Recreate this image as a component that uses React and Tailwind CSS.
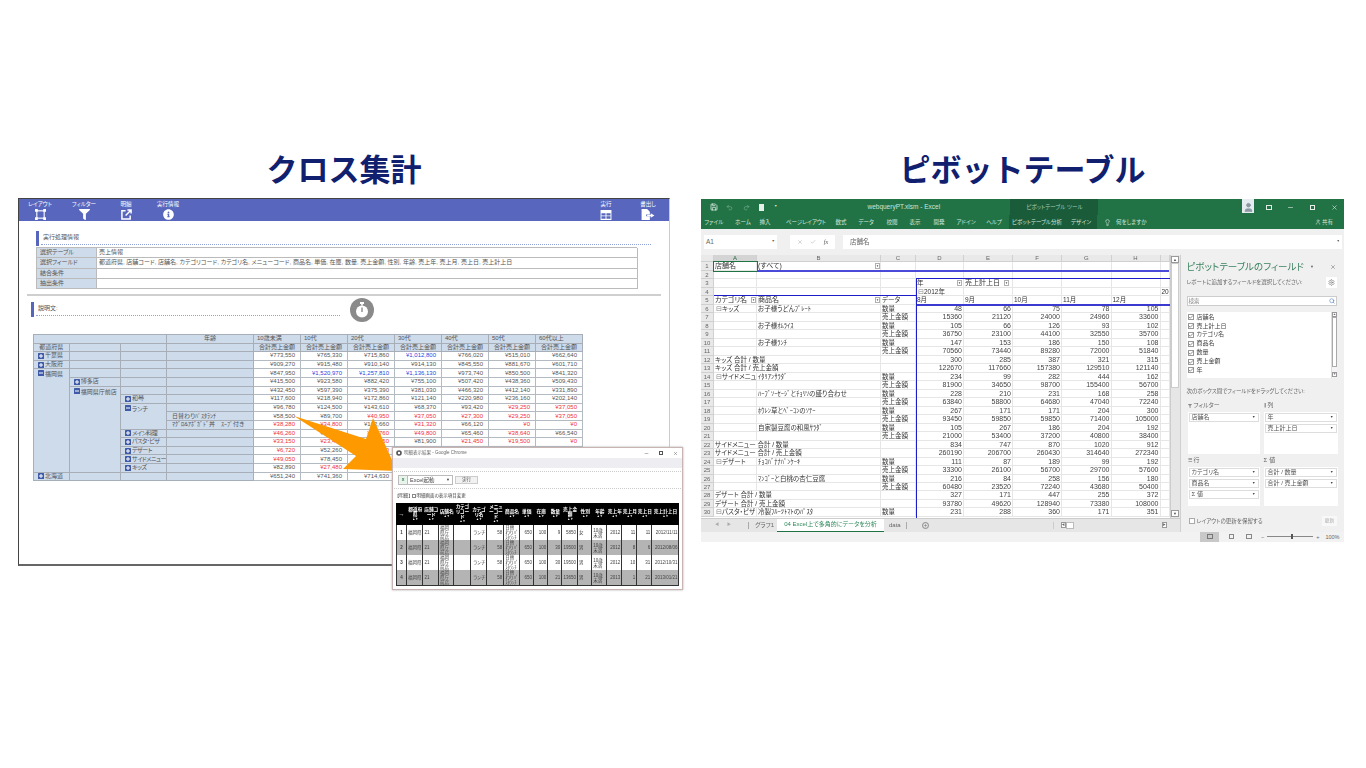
import React from "react";
import { FaFilter, FaInfoCircle } from "react-icons/fa";
import { Save, Undo2, Redo2, Lightbulb, Search, Settings, X, Minus, Check, User, Plus } from "lucide-react";

const jp = "[font-family:'Liberation_Sans','Noto_Sans_CJK_JP',sans-serif]";

function Toggle({ minus }) {
  return (
    <svg width="6" height="6" viewBox="0 0 6 6" className="shrink-0 mr-[1px]">
      <rect width="6" height="6" rx="0.6" fill="#3f5aa6" />
      <rect x="1" y="2.5" width="4" height="1" fill="#fff" />
      {!minus && <rect x="2.5" y="1" width="1" height="4" fill="#fff" />}
    </svg>
  );
}

function ToolItem({ label, icon, cls }) {
  return (
    <div className={"w-[42px] flex flex-col items-center pt-[1px] " + (cls || "")}>
      <div className="text-[5.5px] leading-[8px] h-[9px] text-white whitespace-nowrap">{label}</div>
      <div className="h-[11px] flex items-center justify-center text-white">{icon}</div>
    </div>
  );
}

function SectionHead({ title, cls, lineCls }) {
  return (
    <div className={"flex h-[15px] " + cls}>
      <div className="w-[3px] bg-[#5666bd]" />
      <div className={"ml-[2px] h-[14px] border-b border-dotted border-[#8fa3d8] pl-[2px] text-[6px] leading-[12px] text-[#555] " + lineCls}>{title}</div>
    </div>
  );
}

const fields = "都道府県, 店舗コード, 店舗名, カテゴリコード, カテゴリ名, メニューコード, 商品名, 単価, 在庫, 数量, 売上金額, 性別, 年齢, 売上年, 売上月, 売上日, 売上計上日";

const ageHeads = ["10歳未満", "10代", "20代", "30代", "40代", "50代", "60代以上"];

const B = "#2f3fe0";
const R = "#f03040";
const nums = [
  [["¥773,550"], ["¥765,330"], ["¥715,860"], ["¥1,012,800", B], ["¥766,020"], ["¥515,010"], ["¥662,640"]],
  [["¥909,270"], ["¥915,480"], ["¥910,140"], ["¥914,130"], ["¥845,550"], ["¥881,670"], ["¥601,710"]],
  [["¥847,950"], ["¥1,520,970", B], ["¥1,257,810", B], ["¥1,136,130", B], ["¥973,740"], ["¥850,500"], ["¥841,320"]],
  [["¥415,500"], ["¥923,580"], ["¥882,420"], ["¥755,100"], ["¥507,420"], ["¥438,360"], ["¥509,430"]],
  [["¥432,450"], ["¥597,390"], ["¥375,390"], ["¥381,030"], ["¥466,320"], ["¥412,140"], ["¥331,890"]],
  [["¥117,600"], ["¥218,940"], ["¥172,860"], ["¥121,140"], ["¥220,980"], ["¥236,160"], ["¥202,140"]],
  [["¥96,780"], ["¥124,500"], ["¥143,610"], ["¥68,370"], ["¥93,420"], ["¥29,250", R], ["¥37,050", R]],
  [["¥58,500"], ["¥89,700"], ["¥40,950", R], ["¥37,050", R], ["¥27,300", R], ["¥29,250", R], ["¥37,050", R]],
  [["¥38,280", R], ["¥34,800", R], ["¥102,660"], ["¥31,320", R], ["¥66,120"], ["¥0", R], ["¥0", R]],
  [["¥46,260", R], ["¥60,720"], ["¥38,760", R], ["¥49,800", R], ["¥65,460"], ["¥38,640", R], ["¥66,540"]],
  [["¥33,150", R], ["¥23,400", R], ["¥26,250", R], ["¥81,900"], ["¥21,450", R], ["¥19,500", R], ["¥0", R]],
  [["¥6,720", R], ["¥52,260"], ["¥23,520", R], ["¥51,240"], ["¥30,240", R], ["¥21,840", R], ["¥0", R]],
  [["¥49,050", R], ["¥78,450"], ["¥36,000", R], ["¥44,700", R], ["¥31,950", R], ["¥20,700", R], ["¥0", R]],
  [["¥82,890"], ["¥27,480", R], ["¥0", R], ["¥0", R], ["¥0", R], ["¥0", R], ["¥0", R]],
  [["¥651,240"], ["¥741,360"], ["¥714,630"], ["¥826,110"], ["¥702,330"], ["¥594,120"], ["¥618,450"]],
];

const hc = "border-r border-b border-[#a7aeb8] bg-[#cddbeb] flex items-center text-[6px] text-[#555] whitespace-nowrap overflow-hidden";

function NumCells({ row }) {
  return row.map((c, i) => (
    <div key={i} style={c[1] ? { color: c[1] } : undefined} className="border-r border-b border-[#b4bac2] bg-white flex items-center justify-end pr-[5px] text-[6px] text-[#555]">
      {c[0]}
    </div>
  ));
}

function LeftPivot() {
  return (
    <div className="ml-[14px] mt-[12px] w-[550px] grid grid-cols-[35.7px_51.3px_46px_87px_repeat(7,47px)] auto-rows-[8.6px] border-l border-t border-[#a7aeb8]">
      <div className={hc + " col-span-3"} />
      <div className={hc + " justify-center"}>年齢</div>
      {ageHeads.map((a) => <div key={a} className={hc + " pl-[3px]"}>{a}</div>)}
      <div className={hc + " justify-center"}>都道府県</div>
      <div className={hc} /><div className={hc} /><div className={hc} />
      {ageHeads.map((a) => <div key={a} className={hc + " justify-center"}>合計売上金額</div>)}

      <div className={hc + " pl-[4px]"}><Toggle />千葉県</div>
      <div className={hc} /><div className={hc} /><div className={hc} />
      <NumCells row={nums[0]} />

      <div className={hc + " pl-[4px]"}><Toggle />大阪府</div>
      <div className={hc} /><div className={hc} /><div className={hc} />
      <NumCells row={nums[1]} />

      <div className={hc + " pl-[4px] row-span-12 items-start pt-[1px]"}><Toggle minus />福岡県</div>
      <div className={hc} /><div className={hc} /><div className={hc} />
      <NumCells row={nums[2]} />

      <div className={hc + " pl-[4px]"}><Toggle />博多店</div>
      <div className={hc} /><div className={hc} />
      <NumCells row={nums[3]} />

      <div className={hc + " pl-[4px] row-span-10 items-start pt-[1px]"}><Toggle minus />福岡県庁前店</div>
      <div className={hc} /><div className={hc} />
      <NumCells row={nums[4]} />

      <div className={hc + " pl-[4px]"}><Toggle />和琴</div>
      <div className={hc} />
      <NumCells row={nums[5]} />

      <div className={hc + " pl-[4px] row-span-3 items-start pt-[1px]"}><Toggle minus />ランチ</div>
      <div className={hc} />
      <NumCells row={nums[6]} />

      <div className={hc + " pl-[5px]"}>日替わりﾊﾟｽﾀﾗﾝﾁ</div>
      <NumCells row={nums[7]} />

      <div className={hc + " pl-[5px]"}>ﾏｸﾞﾛ&ｱﾎﾞｶﾞﾄﾞ丼　ｽｰﾌﾟ付き</div>
      <NumCells row={nums[8]} />

      {["メイン料理", "パスタ･ピザ", "デザート", "サイドメニュー", "キッズ"].map((l, i) => (
        <React.Fragment key={l}>
          <div className={hc + " pl-[4px] text-[5.300px] tracking-[-0.5px]"}><Toggle />{l}</div>
          <div className={hc} />
          <NumCells row={nums[9 + i]} />
        </React.Fragment>
      ))}

      <div className={hc + " pl-[4px]"}><Toggle />北海道</div>
      <div className={hc} /><div className={hc} /><div className={hc} />
      <NumCells row={nums[14]} />
    </div>
  );
}

const popCols = "grid-cols-[11px_16.4px_15.6px_15.4px_16.3px_16.7px_17px_15.3px_14.3px_14.4px_14px_15.6px_14.4px_15px_15px_15px_15px_26.3px]";
const popHead = ["都道府県", "店舗コード", "店舗名", "カテゴリコード", "カテゴリ名", "メニューコード", "商品名", "単価", "在庫", "数量", "売上金額", "性別", "年齢", "売上年", "売上月", "売上日", "売上計上日"];
const popRows = [
  ["1", "9", "5850", "女", "2012", "11", "11", "2012/11/11"],
  ["2", "30", "19500", "男", "2012", "8", "6", "2012/08/06"],
  ["3", "30", "19500", "男", "2012", "10", "31", "2012/10/31"],
  ["4", "21", "13650", "男", "2013", "1", "21", "2013/01/21"],
];

function Popup() {
  const cell = "border-r border-[#333] flex items-center text-[4.500px] leading-[5px] text-[#444] overflow-hidden";
  return (
    <div className="absolute left-[373px] top-[248px] w-[291px] h-[143px] bg-white border border-[#c9b4b4] shadow-[0_0_2px_#aaa] z-20">
      <div className="h-[10px] flex items-center pl-[3px] text-[4.500px] text-[#666]">
        <svg width="6" height="6" viewBox="0 0 6 6" className="mr-[2px]"><circle cx="3" cy="3" r="2.8" fill="#555" /><circle cx="3" cy="3" r="1.2" fill="#fff" /></svg>
        明細表示結果 - Google Chrome
        <div className="ml-auto flex items-center gap-[10px] pr-[4px] text-[#555]">
          <Minus size={5} /><div className="w-[4px] h-[4px] border border-[#555]" /><X size={5} />
        </div>
      </div>
      <div className="h-[10px] bg-[#eeeef2]" />
      <div className="mx-[1px] mt-[3px] border-t border-dotted border-[#ccc]" />
      <div className="mt-[3px] flex items-start pl-[5px]">
        <div className="w-[55px] h-[10px] border border-[#bbb] bg-white flex items-center text-[5.500px] text-[#444]">
          <div className="w-[9px] h-full border-r border-[#bbb] bg-[#eaf3ec] flex items-center justify-center text-[4px] text-[#1d7a45] font-bold">X</div>
          <span className="pl-[2px]">Excel起動</span>
          <span className="ml-auto pr-[2px] text-[4px]">▼</span>
        </div>
        <div className="ml-[2px] w-[23px] h-[8px] mt-[1px] border border-[#ccc] bg-[#f2f2f2] flex items-center justify-center text-[4.500px] text-[#444]">実行</div>
      </div>
      <div className="mx-[1px] mt-[3px] border-t border-dotted border-[#ccc]" />
      <div className="mt-[3px] pl-[4px] h-[8px] flex items-center text-[4.500px] text-[#444]">
        【明細】<div className="w-[4px] h-[4px] border border-[#888] mx-[1px]" />明細画面の表示項目変更
      </div>
      <div className={"ml-[3px] mt-[3px] w-[283px] grid " + popCols + " grid-rows-[22px_15px_15px_15px_15px] border-b border-[#333]"}>
        <div className="bg-black flex items-center justify-center text-[6px] text-white font-bold">→</div>
        {popHead.map((h) => (
          <div key={h} className="bg-black flex flex-col items-center justify-center text-white font-bold text-[4.700px] leading-[5px] text-center [font-family:'Liberation_Serif','Noto_Sans_CJK_JP',serif]">
            <span>{h}</span>
            <span className="text-[3px] leading-[5px]">▲▼</span>
          </div>
        ))}
        {popRows.map((r, i) => {
          const bg = i % 2 ? " bg-[#b4b4b4]" : " bg-white";
          return (
            <React.Fragment key={r[0]}>
              <div className={cell + bg + " border-l justify-center font-bold"}>{r[0]}</div>
              <div className={cell + bg + " pl-[1px]"}>福岡県</div>
              <div className={cell + bg + " pl-[1px]"}>21</div>
              <div className={cell + bg + " pl-[1px]"}>福岡県庁前店</div>
              <div className={cell + bg} />
              <div className={cell + bg + " justify-end pr-[1px]"}>ランチ</div>
              <div className={cell + bg + " justify-end pr-[1px]"}>58</div>
              <div className={cell + bg + " pl-[1px]"}>日替わりﾊﾟｽﾀﾗﾝﾁ</div>
              <div className={cell + bg + " justify-end pr-[1px]"}>650</div>
              <div className={cell + bg + " justify-end pr-[1px]"}>100</div>
              <div className={cell + bg + " justify-end pr-[1px]"}>{r[1]}</div>
              <div className={cell + bg + " justify-end pr-[1px]"}>{r[2]}</div>
              <div className={cell + bg + " pl-[1px]"}>{r[3]}</div>
              <div className={cell + bg + " pl-[1px]"}>10歳未満</div>
              <div className={cell + bg + " justify-end pr-[1px]"}>{r[4]}</div>
              <div className={cell + bg + " justify-end pr-[1px]"}>{r[5]}</div>
              <div className={cell + bg + " justify-end pr-[1px]"}>{r[6]}</div>
              <div className={cell + bg + " justify-end"}>{r[7]}</div>
            </React.Fragment>
          );
        })}
      </div>
    </div>
  );
}

function LeftPanel() {
  const a = "border-r border-b border-[#bbb] flex items-center text-[6px] text-[#555] whitespace-nowrap";
  return (
    <div className={"relative w-[652px] h-[368px] bg-white border-l border-t border-b-2 border-r border-l-[#444] border-t-[#444] border-b-[#666] border-r-[#ccc] [font-feature-settings:'palt'] " + jp}>
      <div className="h-[22px] bg-[#5867bd] flex">
        <ToolItem label="レイアウト" icon={
          <svg width="11" height="11" viewBox="0 0 12 12" fill="#fff"><rect x="2" y="2" width="8" height="8" fill="none" stroke="#fff" strokeWidth="1.200" /><rect x="0" y="0" width="3" height="3" /><rect x="9" y="0" width="3" height="3" /><rect x="0" y="9" width="3" height="3" /><rect x="9" y="9" width="3" height="3" /></svg>
        } />
        <ToolItem cls="ml-[2px]" label="フィルター" icon={<FaFilter size={11} />} />
        <ToolItem label="明細" icon={
          <svg width="11" height="11" viewBox="0 0 12 12" fill="none" stroke="#fff" strokeWidth="1.600"><path d="M5 2H1v9h9V7" /><path d="M5 7l6-6M7 1h4v4" /></svg>
        } />
        <ToolItem label="実行情報" icon={<FaInfoCircle size={11} />} />
        <div className="flex-1" />
        <ToolItem label="実行" icon={
          <svg width="12" height="10" viewBox="0 0 12 11" fill="#fff"><path d="M0 0h12v11H0z" /><path d="M1 3.500h4.500v2.500H1zM6.500 3.500H11v2.500H6.500zM1 7h4.500v2.500H1zM6.500 7H11v2.500H6.500z" fill="#5867bd" /></svg>
        } />
        <ToolItem label="書出し" icon={
          <svg width="14" height="11" viewBox="0 0 14 12" fill="#fff"><path d="M0 0h6l3 3v3H5v2h4v4H0z" /><path d="M6 6.200h4V4.500L14 7l-4 2.500V7.800H6z" /></svg>
        } />
      </div>

      <SectionHead title="実行処理情報" cls="ml-[17px] mt-[10px]" lineCls="w-[610px]" />

      <div className="ml-[17px] mt-[1px] w-[601px] grid grid-cols-[60px_541px] auto-rows-[10.25px] border-l border-t border-[#bbb]">
        <div className={a + " bg-[#cddbeb] pl-[3px]"}>選択テーブル</div><div className={a + " pl-[2px]"}>売上情報</div>
        <div className={a + " bg-[#cddbeb] pl-[3px]"}>選択フィールド</div><div className={a + " pl-[2px] text-[5.700px]"}>{fields}</div>
        <div className={a + " bg-[#cddbeb] pl-[3px]"}>結合条件</div><div className={a} />
        <div className={a + " bg-[#cddbeb] pl-[3px]"}>抽出条件</div><div className={a} />
      </div>

      <div className="ml-[8px] mt-[5px] w-[634px] h-[2px] bg-[#cfcfcf]" />

      <div className="ml-[12px] mt-[2px] h-[24px] flex">
        <div className="mt-[4px] flex">
          <SectionHead title="説明文:" cls="" lineCls="w-[304px]" />
        </div>
        <div className="ml-[10px] w-[24px] h-[24px] rounded-full bg-[#8a8a8a] flex items-center justify-center">
          <svg width="14" height="16" viewBox="0 0 14 16" fill="#fff"><rect x="5" y="0" width="4" height="2" /><rect x="6.200" y="1.500" width="1.600" height="2" /><circle cx="7" cy="9.500" r="6" /><rect x="6.300" y="5.500" width="1.400" height="4.500" fill="#8a8a8a" /></svg>
        </div>
      </div>

      <LeftPivot />

      <svg className="absolute left-[270px] top-[212px] z-10" width="110" height="60" viewBox="0 0 110 60">
        <polygon points="5,5 77,28 84,7 108,60 54,58 67,45" fill="#ff9900" />
      </svg>

      <Popup />
    </div>
  );
}

/* ---------- Excel ---------- */
const sheet = [
  [6, "⊟キッズ", "お子様うどんﾌﾟﾚｰﾄ", "数量", [48, 66, 75, 78, 105]],
  [7, "", "", "売上金額", [15360, 21120, 24000, 24960, 33600]],
  [8, "", "お子様ｵﾑﾗｲｽ", "数量", [105, 66, 126, 93, 102]],
  [9, "", "", "売上金額", [36750, 23100, 44100, 32550, 35700]],
  [10, "", "お子様ﾗﾝﾁ", "数量", [147, 153, 186, 150, 108]],
  [11, "", "", "売上金額", [70560, 73440, 89280, 72000, 51840]],
  [12, "キッズ 合計 / 数量", "", "", [300, 285, 387, 321, 315]],
  [13, "キッズ 合計 / 売上金額", "", "", [122670, 117660, 157380, 129510, 121140]],
  [14, "⊟サイドメニュー", "ｲﾀﾘｱﾝｻﾗﾀﾞ", "数量", [234, 99, 282, 444, 162]],
  [15, "", "", "売上金額", [81900, 34650, 98700, 155400, 56700]],
  [16, "", "ﾊｰﾌﾞｿｰｾｰｼﾞとﾁｮﾘｿの盛り合わせ", "数量", [228, 210, 231, 168, 258]],
  [17, "", "", "売上金額", [63840, 58800, 64680, 47040, 72240]],
  [18, "", "ﾎｳﾚﾝ草とﾍﾞｰｺﾝのｿﾃｰ", "数量", [267, 171, 171, 204, 300]],
  [19, "", "", "売上金額", [93450, 59850, 59850, 71400, 105000]],
  [20, "", "自家製豆腐の和風ｻﾗﾀﾞ", "数量", [105, 267, 186, 204, 192]],
  [21, "", "", "売上金額", [21000, 53400, 37200, 40800, 38400]],
  [22, "サイドメニュー 合計 / 数量", "", "", [834, 747, 870, 1020, 912]],
  [23, "サイドメニュー 合計 / 売上金額", "", "", [260190, 206700, 260430, 314640, 272340]],
  [24, "⊟デザート", "ﾁｮｺﾊﾞﾅﾅﾊﾟﾝｹｰｷ", "数量", [111, 87, 189, 99, 192]],
  [25, "", "", "売上金額", [33300, 26100, 56700, 29700, 57600]],
  [26, "", "ﾏﾝｺﾞｰと白桃の杏仁豆腐", "数量", [216, 84, 258, 156, 180]],
  [27, "", "", "売上金額", [60480, 23520, 72240, 43680, 50400]],
  [28, "デザート 合計 / 数量", "", "", [327, 171, 447, 255, 372]],
  [29, "デザート 合計 / 売上金額", "", "", [93780, 49620, 128940, 73380, 108000]],
  [30, "⊟パスタ・ピザ", "冷製ﾌﾙｰﾂﾄﾏﾄのﾊﾟｽﾀ", "数量", [231, 288, 360, 171, 351]],
];

const sc = "border-r border-b border-[#e4e7e4] text-[6.500px] leading-[8px] text-[#333] whitespace-nowrap pl-[1px] relative";
const rh = "bg-[#e9e9e9] border-r border-b border-[#d0d0d0] text-[6px] leading-[8px] text-[#666] text-center [font-family:'Liberation_Sans',sans-serif]";
const nc = "border-r border-b border-[#e4e7e4] text-[7px] leading-[8px] text-[#444] text-right pr-[1px] [font-family:'Liberation_Sans',sans-serif]";

function Drop({ cls }) {
  return <span className={"absolute top-[1px] w-[5px] h-[5.500px] bg-white border border-[#b0b0b0] flex items-center justify-center text-[3px] text-[#555] leading-none " + cls}>▼</span>;
}

function Empty({ n }) {
  return Array.from({ length: n }).map((_, i) => <div key={i} className={sc} />);
}

function Sheet() {
  return (
    <div className="relative w-[468.500px] h-[263px] overflow-hidden bg-white">
      <div className="grid grid-cols-[13px_43px_124px_35px_48px_49px_49px_49.500px_49px_9px] grid-rows-[7.400px] auto-rows-[8.490px]">
        <div className={rh} />
        {["A", "B", "C", "D", "E", "F", "G", "H", ""].map((c, i) => (
          <div key={i} className={"border-r border-b border-[#d0d0d0] text-[6px] leading-[7px] text-center [font-family:'Liberation_Sans',sans-serif] " + (i === 0 ? "bg-[#d4d4d4] text-[#1d6b40]" : "bg-[#e9e9e9] text-[#666]")}>{c}</div>
        ))}

        <div className={rh + " bg-[#d4d4d4] text-[#1d6b40]"}>1</div>
        <div className={sc + " outline outline-1 outline-[#217346] z-10 text-[7px]"}>店舗名</div>
        <div className={sc + " text-[7px]"}>(すべて)<Drop cls="right-[0px]" /></div>
        <Empty n={7} />

        <div className={rh}>2</div><Empty n={9} />

        <div className={rh}>3</div><Empty n={3} />
        <div className={sc}>年<Drop cls="right-[1px]" /></div>
        <div className={sc + " text-[7px]"}>売上計上日<Drop cls="right-[3px]" /></div>
        <Empty n={4} />

        <div className={rh}>4</div><Empty n={3} />
        <div className={sc + " pl-[2px]"}><span className="text-[#888]">⊟</span>2012年</div>
        <Empty n={3} /><Empty n={1} />
        <div className={sc}>20</div>

        <div className={rh}>5</div>
        <div className={sc + " text-[7px]"}>カテゴリ名<Drop cls="right-[0px]" /></div>
        <div className={sc + " text-[7px]"}>商品名<Drop cls="right-[0px]" /></div>
        <div className={sc}>データ</div>
        {["8月", "9月", "10月", "11月", "12月"].map((m) => <div key={m} className={sc}>{m}</div>)}
        <Empty n={1} />

        {sheet.map((r) => {
          const total = r[1].includes("合計");
          const expander = r[1][0] === "⊟";
          return (
            <React.Fragment key={r[0]}>
              <div className={rh}>{r[0]}</div>
              {total ? (
                <div className={sc + " col-span-2"}>{r[1]}</div>
              ) : (
                <>
                  <div className={sc + (expander ? " overflow-hidden pl-[2px]" : "")}>
                    {expander ? <><span className="text-[#888]">⊟</span>{r[1].slice(1)}</> : r[1]}
                  </div>
                  <div className={sc}>{r[2]}</div>
                </>
              )}
              <div className={sc}>{r[3]}</div>
              {r[4].map((n, i) => <div key={i} className={nc}>{n}</div>)}
              <Empty n={1} />
            </React.Fragment>
          );
        })}
      </div>
      {/* pivot outline lines lying over the grid */}
      <div className="absolute left-[56px] top-[15px] w-[412px] h-[1.500px] bg-[#4a4ad8]" />
      <div className="absolute left-[215px] top-[23px] w-[254px] h-[1.200px] bg-[#1c1cc8]" />
      <div className="absolute left-[13px] top-[40px] w-[202px] h-[1.200px] bg-[#1c1cc8]" />
      <div className="absolute left-[215px] top-[49px] w-[254px] h-[1.500px] bg-[#3a3ad0]" />
      <div className="absolute left-[215px] top-[23px] w-[1.200px] h-[240px] bg-[#1c1cc8]" />
    </div>
  );
}

function Check2({ label }) {
  return (
    <div className="h-[8.900px] flex items-center text-[6px] text-[#444]">
      <div className="w-[6px] h-[6px] border border-[#999] bg-white flex items-center justify-center mr-[3px] overflow-visible"><Check size={6} strokeWidth={3} color="#666" className="shrink-0" /></div>
      {label}
    </div>
  );
}

function FieldItem({ label }) {
  return (
    <div className="h-[9.500px] bg-white border border-[#ddd] mb-[1.500px] flex items-center px-[2px] text-[6px] text-[#555]">
      {label}<span className="ml-auto text-[3.500px] text-[#444]">▼</span>
    </div>
  );
}

function PivotPane() {
  return (
    <div className="w-[164.500px] h-[276.500px] bg-[#f0f0f0] pl-[6px] pr-[7px] pt-[6px] border-l border-[#d0d0d0]">
      <div className="flex items-center h-[12px]">
        <span className="text-[9.500px] leading-[12px] text-[#3b8260] whitespace-nowrap">ピボットテーブルのフィールド</span>
        <span className="ml-auto text-[4px] text-[#666] mr-[16px]">▼</span>
        <X size={6} color="#666" className="mr-[1px]" />
      </div>
      <div className="flex items-center h-[12px] mt-[3px]">
        <span className="text-[5.500px] text-[#666] whitespace-nowrap">レポートに追加するフィールドを選択してください:</span>
        <div className="ml-auto w-[11px] h-[11px] bg-white flex items-center justify-center"><Settings size={7} color="#777" /></div>
      </div>
      <div className="mt-[7.700px] h-[10px] bg-white border border-[#ccc] flex items-center pl-[1px] text-[5.500px] text-[#888]">
        検索<Search size={6} color="#3a6fb0" className="ml-auto mr-[1px]" />
      </div>
      <div className="mt-[6px] h-[66px] bg-white pl-[1px] pt-[1px] relative">
        {["店舗名", "売上計上日", "カテゴリ名", "商品名", "数量", "売上金額", "年"].map((f) => <Check2 key={f} label={f} />)}
        <div className="absolute right-0 top-0 bottom-0 w-[6px] bg-[#f4f4f4] border-l border-[#ddd]">
          <div className="h-[5px] border border-[#999] bg-white text-[3px] leading-[3px] text-center text-[#555]">▲</div>
          <div className="h-[50px] border border-[#aaa] bg-white" />
          <div className="h-[5px] mt-[5px] border border-[#999] bg-white text-[3px] leading-[3px] text-center text-[#555]">▼</div>
        </div>
      </div>
      <div className="mt-[9.700px] text-[5.500px] leading-[8px] text-[#666] whitespace-nowrap">次のボックス間でフィールドをドラッグしてください:</div>
      <div className="mt-[5.800px] ml-[1px] grid grid-cols-[72px_74px] gap-x-[4px] text-[6px] text-[#666]">
        <div>
          <div className="h-[9px] flex items-center">
            <FaFilter size={4} color="#888" className="mr-[2px]" />フィルター
          </div>
          <div className="mt-[1.500px] h-[42px] bg-white pt-[1px] px-[1px]"><FieldItem label="店舗名" /></div>
        </div>
        <div>
          <div className="h-[9px] flex items-center"><span className="text-[5px] mr-[2px]">⫼</span>列</div>
          <div className="mt-[1.500px] h-[42px] bg-white pt-[1px] px-[1px]"><FieldItem label="年" /><FieldItem label="売上計上日" /></div>
        </div>
        <div className="mt-[2.500px]">
          <div className="h-[9px] flex items-center"><span className="text-[5px] mr-[2px]">☰</span>行</div>
          <div className="mt-[1.500px] h-[39px] bg-white pt-[1px] px-[1px]"><FieldItem label="カテゴリ名" /><FieldItem label="商品名" /><FieldItem label="Σ 値" /></div>
        </div>
        <div className="mt-[2.500px]">
          <div className="h-[9px] flex items-center"><span className="mr-[2px]">Σ</span>値</div>
          <div className="mt-[1.500px] h-[39px] bg-white pt-[1px] px-[1px]"><FieldItem label="合計 / 数量" /><FieldItem label="合計 / 売上金額" /></div>
        </div>
      </div>
      <div className="mt-[10px] h-[10px] flex items-center text-[5.500px] text-[#666]">
        <div className="w-[6px] h-[6px] bg-white border border-[#aaa] mr-[2px] ml-[2px]" />
        レイアウトの更新を保留する
        <div className="ml-auto w-[15px] h-[10px] bg-[#f8f8f8] flex items-center justify-center text-[5px] text-[#aaa]">更新</div>
      </div>
    </div>
  );
}

const tabs = [
  ["ファイル", "ml-[13px]"], ["ホーム", "ml-[29px]"], ["挿入", "ml-[22px]"], ["ページレイアウト", "ml-[41px]"], ["数式", "ml-[35px]"], ["データ", "ml-[25px]"], ["校閲", "ml-[26px]"], ["表示", "ml-[23px]"], ["開発", "ml-[24px]"], ["アドイン", "ml-[27px]"], ["ヘルプ", "ml-[28px]"],
];

function ExcelWindow() {
  return (
    <div className={"w-[643px] h-[343px] flex flex-col [font-feature-settings:'palt'] " + jp}>
      <div className="h-[16px] bg-[#217346] flex items-center text-[#cfe3d8] relative">
        <Save size={8} color="#fff" className="ml-[9px]" />
        <Undo2 size={7} color="#7fb096" className="ml-[8px]" />
        <Redo2 size={7} color="#7fb096" className="ml-[10px]" />
        <div className="ml-[9px] w-[5px] h-[7px] bg-[#e6efe9]" />
        <span className="ml-[10px] text-[3.500px]">▼</span>
        <span className="ml-[90px] w-[70px] text-center text-[6.500px] whitespace-nowrap [font-family:'Liberation_Sans',sans-serif]">webqueryPT.xlsm - Excel</span>
        <div className="ml-[73px] w-[88px] h-full bg-[#1a5c39] flex items-center justify-center text-[5.500px] text-[#a9cdb9]">ピボットテーブル ツール</div>
        <div className="ml-[144px] w-[12px] h-[14px] -mt-[2px] bg-[#e4ecf0] flex items-end justify-center overflow-hidden"><User size={11} fill="#8a97a0" color="#8a97a0" /></div>
        <div className="ml-[12px] w-[6px] h-[5px] border border-[#dcebe3]" />
        <Minus size={7} color="#e6f0ea" className="ml-[15px]" />
        <div className="ml-[16px] w-[5px] h-[5px] border border-[#e6f0ea]" />
        <X size={7} color="#e6f0ea" className="ml-[16px]" />
      </div>
      <div className="h-[14px] bg-[#217346] flex items-center text-[5.500px] text-[#d5e6dc] whitespace-nowrap">
        {tabs.map((t) => <div key={t[0]} className={"w-0 flex justify-center " + t[1]}>{t[0]}</div>)}
        <div className="ml-[15px] w-[88px] h-full bg-[#1a5c39] flex items-center">
          <div className="w-0 ml-[28px] flex justify-center">ピボットテーブル分析</div>
          <div className="w-0 ml-[44px] flex justify-center">デザイン</div>
        </div>
        <Lightbulb size={7} color="#e0ece5" className="ml-[7px]" />
        <span className="ml-[5px]">何をしますか</span>
        <span className="ml-auto mr-[11px] flex items-center"><User size={6} className="mr-[1px]" />共有</span>
      </div>
      <div className="h-[26px] bg-[#f0f0f0] flex pt-[6px] pl-[3px] text-[6.500px] text-[#666]">
        <div className="w-[73px] h-[14px] bg-white flex items-center pl-[2px] [font-family:'Liberation_Sans',sans-serif]">A1<span className="ml-auto mr-[2px] text-[3.500px]">▼</span></div>
        <div className="ml-[13px] w-[45px] h-[14px] bg-white flex items-center justify-around text-[#aaa] px-[3px]">
          <X size={6} /><Check size={6} /><i className="text-[#555] text-[6px] [font-family:'Liberation_Serif',serif]">fx</i>
        </div>
        <div className="ml-[8px] w-[499px] h-[14px] bg-white flex items-center pl-[7px]">店舗名<span className="ml-auto mr-[2px] text-[3.500px]">▼</span></div>
      </div>
      <div className="flex">
        <div className="w-[478.500px] flex flex-col">
          <div className="flex h-[263px]">
            <Sheet />
            <div className="w-[10px] h-full bg-[#e6e6e6] border-l border-[#ccc] flex flex-col items-center pt-[1px]">
              <div className="w-[8px] h-[7px] bg-white border border-[#999] text-[4px] leading-[5px] text-center text-[#555]">▲</div>
              <div className="w-[8px] h-[125px] bg-white border border-[#ccc]" />
              <div className="mt-auto w-[8px] h-[7px] bg-white border border-[#999] text-[4px] leading-[5px] text-center text-[#555] mb-[1px]">▼</div>
            </div>
          </div>
          <div className="h-[13.500px] bg-[#e6e6e6] flex items-center text-[6px] text-[#666] border-t border-[#ccc]">
            <span className="ml-[14px] text-[4px] text-[#aaa]">◀</span>
            <span className="ml-[8px] text-[4px] text-[#aaa]">▶</span>
            <div className="ml-[17px] w-px h-[7px] bg-[#aaa]" />
            <span className="ml-[6px]">グラフ1</span>
            <div className="ml-[3px] w-[107px] h-full bg-white border-b border-[#217346] text-[#2f8a5b] flex items-center justify-center whitespace-nowrap">04 Excel上で多角的にデータを分析</div>
            <span className="ml-[5px]">data</span>
            <div className="ml-[5px] w-px h-[7px] bg-[#aaa]" />
            <div className="ml-[15px] w-[7px] h-[7px] rounded-full border border-[#888] flex items-center justify-center"><Plus size={5} /></div>
            <div className="ml-[124px] w-px h-[7px] bg-[#ccc]" />
            <div className="ml-[7px] w-[5px] h-[6px] bg-white border border-[#999] text-[3px] leading-[4px] text-center">◀</div>
            <div className="w-[8px] h-[7px] bg-white border border-[#bbb]" />
            <div className="ml-[88px] w-[5px] h-[6px] bg-white border border-[#999] text-[3px] leading-[4px] text-center">▶</div>
          </div>
        </div>
        <PivotPane />
      </div>
      <div className="h-[10.500px] bg-[#f2f2f2] flex items-center text-[5.500px] text-[#666] relative">
        <div className="ml-[499px] w-[19px] h-full bg-[#c8c8c8] flex items-center justify-center"><div className="w-[6px] h-[5px] border border-[#777]" /></div>
        <div className="ml-[10px] w-[5px] h-[5px] border border-[#888]" />
        <div className="ml-[12px] w-[6px] h-[5px] border border-[#888]" />
        <span className="ml-[9px]">−</span>
        <div className="ml-[3px] w-[46px] h-px bg-[#888] relative"><div className="absolute left-[24px] -top-[2px] w-[2px] h-[5px] bg-[#555]" /></div>
        <span className="ml-[3px]">+</span>
        <span className="ml-[6px] [font-family:'Liberation_Sans',sans-serif]">100%</span>
      </div>
    </div>
  );
}

function Title({ children }) {
  return <div className="h-[44px] flex items-center justify-center text-[31px] leading-[44px] font-bold text-[#10206f] [font-family:'Noto_Sans_CJK_JP',sans-serif]">{children}</div>;
}

export default function App() {
  return (
    <div className="w-[1366px] h-[768px] bg-white flex overflow-hidden">
      <div className="ml-[18px] w-[652px] pt-[146px]">
        <Title>クロス集計</Title>
        <div className="mt-[8px] blur-[0.35px]"><LeftPanel /></div>
      </div>
      <div className="ml-[31px] w-[643px] pt-[146px]">
        <Title>ピボットテーブル</Title>
        <div className="mt-[9px] blur-[0.35px]"><ExcelWindow /></div>
      </div>
    </div>
  );
}
